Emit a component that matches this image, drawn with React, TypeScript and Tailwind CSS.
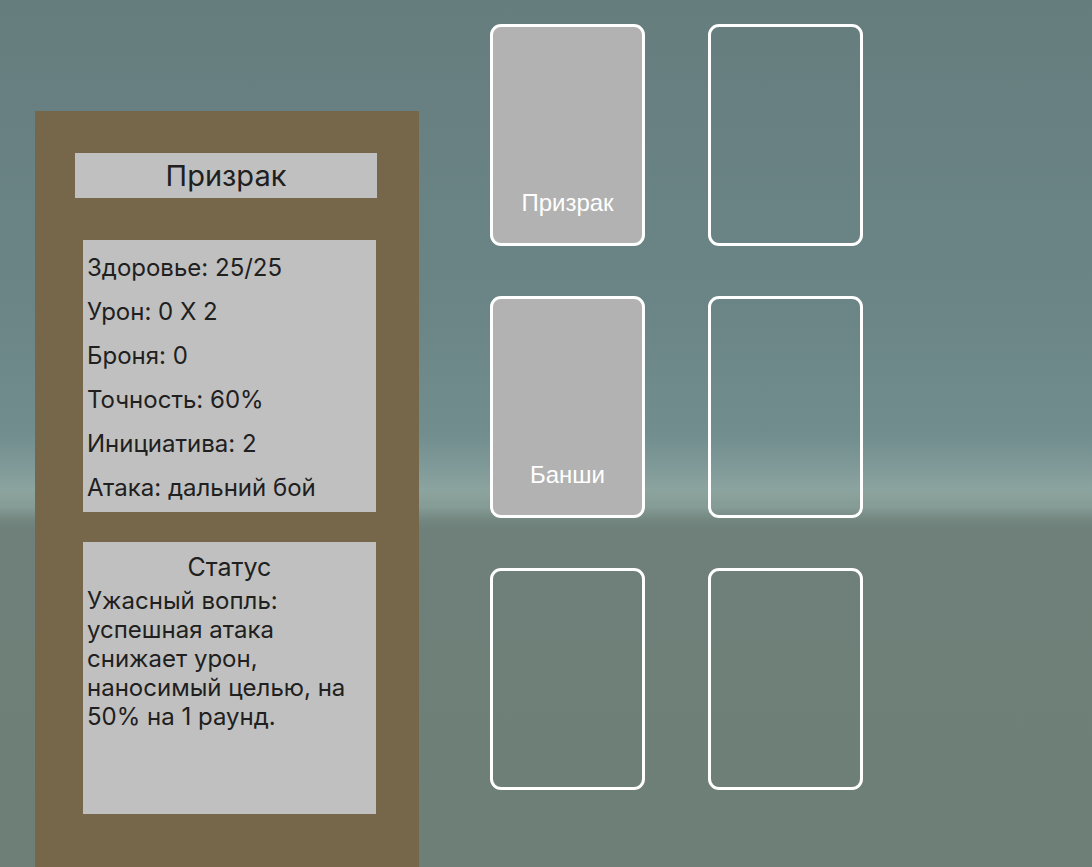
import React from 'react';

const stats = [
  'Здоровье: 25/25',
  'Урон: 0 X 2',
  'Броня: 0',
  'Точность: 60%',
  'Инициатива: 2',
  'Атака: дальний бой',
];

const statusLines = [
  'Ужасный вопль:',
  'успешная атака',
  'снижает урон,',
  'наносимый целью, на',
  '50% на 1 раунд.',
];

const slots: (string | null)[] = ['Призрак', null, 'Банши', null, null, null];

const Card: React.FC<{ name: string | null }> = ({ name }) => (
  <div
    className={`h-[222px] rounded-[11px] border-[3px] border-white flex items-end justify-center pb-[27px] ${
      name ? 'bg-[#b2b2b2]' : ''
    }`}
  >
    {name && (
      <span className="text-white text-[24px] leading-[26px] font-['Liberation_Sans',Arial,sans-serif]">
        {name}
      </span>
    )}
  </div>
);

export default function App() {
  return (
    <div className="w-[1092px] h-[867px] overflow-hidden flex items-start bg-[linear-gradient(to_bottom,#667d7e_0%,#6b8586_35%,#728d8e_50%,#809a99_54%,#8ca49f_56.5%,#859b95_58.5%,#738680_60%,#6e8079_61%,#6d7f77_100%)] font-['Inter',sans-serif] text-[#202020]">
      {/* info panel */}
      <div className="ml-[35px] mt-[111px] w-[384px] h-[756px] bg-[#76664a] pt-[42px] flex flex-col">
        <div className="ml-[40px] w-[302px] h-[45px] bg-[#c0c0c0] flex items-center justify-center text-[29px]">
          Призрак
        </div>

        <div className="ml-[48px] mt-[42px] w-[293px] h-[272px] bg-[#c0c0c0] pt-[6px] pl-[4px] text-[24px]">
          {stats.map((s) => (
            <div key={s} className="leading-[44px]">
              {s}
            </div>
          ))}
        </div>

        <div className="ml-[48px] mt-[30px] w-[293px] h-[272px] bg-[#c0c0c0] pt-[10px] pl-[4px] text-[24px]">
          <div className="text-center leading-[30px] pr-[4px] text-[25px]">Статус</div>
          <div className="mt-[4px]">
            {statusLines.map((l) => (
              <div key={l} className="leading-[29px]">
                {l}
              </div>
            ))}
          </div>
        </div>
      </div>

      {/* card slots */}
      <div className="ml-[71px] mt-[24px] grid grid-cols-[155px_155px] gap-x-[63px] gap-y-[50px]">
        {slots.map((s, i) => (
          <Card key={i} name={s} />
        ))}
      </div>
    </div>
  );
}
